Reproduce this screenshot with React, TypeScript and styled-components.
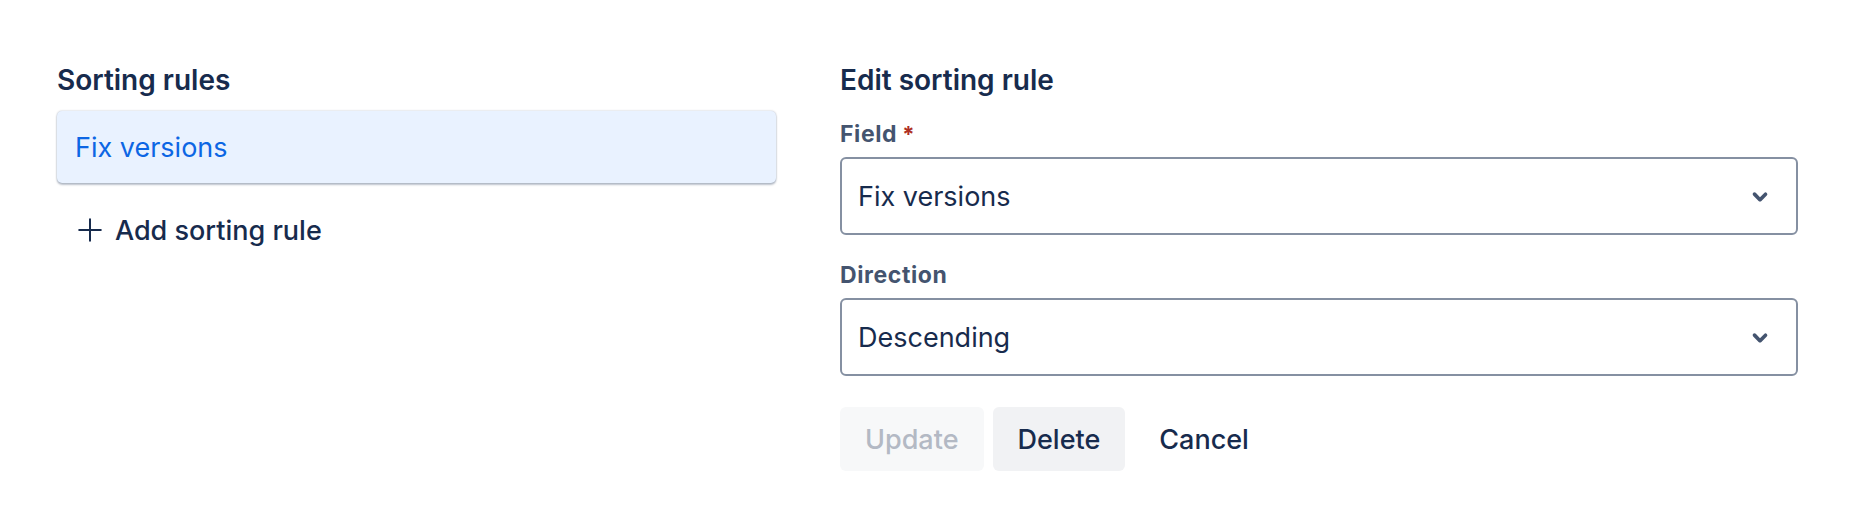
import React from 'react';
import { createGlobalStyle, styled } from 'styled-components';

const GlobalStyle = createGlobalStyle`
  html, body {
    margin: 0;
    padding: 0;
    background: #ffffff;
  }
  body {
    font-family: Inter, "Noto Sans", "Liberation Sans", sans-serif;
    color: #172b4d;
    -webkit-font-smoothing: antialiased;
  }
`;

const Page = styled.div`
  display: grid;
  grid-template-columns: 719px 1fr;
  column-gap: 64px;
  width: 1875px;
  height: 525px;
  box-sizing: border-box;
  padding: 64px 77px 0 57px;
`;

const Column = styled.section`
  display: flex;
  flex-direction: column;
`;

const Heading = styled.h2`
  margin: 0;
  font-size: 28px;
  line-height: 32px;
  font-weight: 600;
  color: #172b4d;
`;

const RuleList = styled.ul`
  list-style: none;
  margin: 15px 0 0;
  padding: 0;
`;

const RuleItem = styled.li<{ $selected?: boolean }>`
  display: flex;
  align-items: center;
  height: 72px;
  padding: 0 18px;
  border-radius: 5px;
  background: ${(p) => (p.$selected ? '#e9f2ff' : '#ffffff')};
  color: ${(p) => (p.$selected ? '#0c66e4' : '#172b4d')};
  font-size: 27px;
  box-shadow: 0 2px 2px rgba(9, 30, 66, 0.25), 0 0 2px rgba(9, 30, 66, 0.31);
  cursor: pointer;
`;

const AddButton = styled.button`
  align-self: flex-start;
  display: flex;
  align-items: center;
  gap: 9px;
  height: 62px;
  margin-top: 16px;
  padding: 0 16px 0 17px;
  border: none;
  border-radius: 6px;
  background: transparent;
  font-family: inherit;
  font-size: 27px;
  font-weight: 500;
  color: #172b4d;
  cursor: pointer;
`;

const Label = styled.label<{ $first?: boolean }>`
  display: flex;
  align-items: center;
  gap: 5px;
  margin: ${(p) => (p.$first ? '25px' : '27px')} 0 10px;
  font-size: 23px;
  line-height: 26px;
  font-weight: 700;
  letter-spacing: 0.6px;
  color: #44546f;
`;

const Required = styled.span`
  color: #ae2e24;
  font-size: 22px;
`;

const SelectBox = styled.div`
  display: flex;
  align-items: center;
  justify-content: space-between;
  height: 78px;
  box-sizing: border-box;
  padding: 0 14px 0 16px;
  border: 2px solid #8590a2;
  border-radius: 6px;
  background: #ffffff;
  font-size: 27px;
  color: #172b4d;
  cursor: pointer;
`;

const Actions = styled.div`
  display: flex;
  gap: 9px;
  margin-top: 31px;
`;

const ActionButton = styled.button<{ $variant: 'disabled' | 'default' | 'subtle' }>`
  height: 64px;
  padding: 0 25px;
  border: none;
  border-radius: 6px;
  font-family: inherit;
  font-size: 27px;
  font-weight: 500;
  background: ${(p) =>
    p.$variant === 'disabled' ? '#f7f8f9' : p.$variant === 'default' ? '#f1f2f4' : 'transparent'};
  color: ${(p) => (p.$variant === 'disabled' ? '#b3b9c4' : '#172b4d')};
  cursor: ${(p) => (p.$variant === 'disabled' ? 'not-allowed' : 'pointer')};
`;

const ChevronDown = () => (
  <svg width="44" height="44" viewBox="0 0 24 24" aria-hidden="true">
    <path
      fill="#44546f"
      d="M8.292 10.293a1.009 1.009 0 0 0 0 1.419l2.939 2.965c.218.215.5.322.779.322s.556-.107.769-.322l2.93-2.955a1.01 1.01 0 0 0 0-1.419.987.987 0 0 0-1.406 0l-2.298 2.317-2.307-2.327a.99.99 0 0 0-1.406 0z"
    />
  </svg>
);

const PlusIcon = () => (
  <svg width="32" height="32" viewBox="0 0 24 24" aria-hidden="true">
    <path
      fill="#172b4d"
      d="M12.75 11.25V3.9a.75.75 0 0 0-1.5 0v7.35H3.9a.75.75 0 0 0 0 1.5h7.35v7.35a.75.75 0 0 0 1.5 0v-7.35h7.35a.75.75 0 0 0 0-1.5z"
    />
  </svg>
);

type SelectProps = {
  value: string;
};

const Select = ({ value }: SelectProps) => (
  <SelectBox role="combobox">
    <span>{value}</span>
    <ChevronDown />
  </SelectBox>
);

const App = () => {
  return (
    <>
      <GlobalStyle />
      <Page>
        <Column>
          <Heading>Sorting rules</Heading>
          <RuleList>
            <RuleItem $selected>Fix versions</RuleItem>
          </RuleList>
          <AddButton>
            <PlusIcon />
            Add sorting rule
          </AddButton>
        </Column>
        <Column>
          <Heading>Edit sorting rule</Heading>
          <Label $first>
            Field
            <Required>*</Required>
          </Label>
          <Select value="Fix versions" />
          <Label>Direction</Label>
          <Select value="Descending" />
          <Actions>
            <ActionButton $variant="disabled" disabled>
              Update
            </ActionButton>
            <ActionButton $variant="default">Delete</ActionButton>
            <ActionButton $variant="subtle">Cancel</ActionButton>
          </Actions>
        </Column>
      </Page>
    </>
  );
};

export default App;
